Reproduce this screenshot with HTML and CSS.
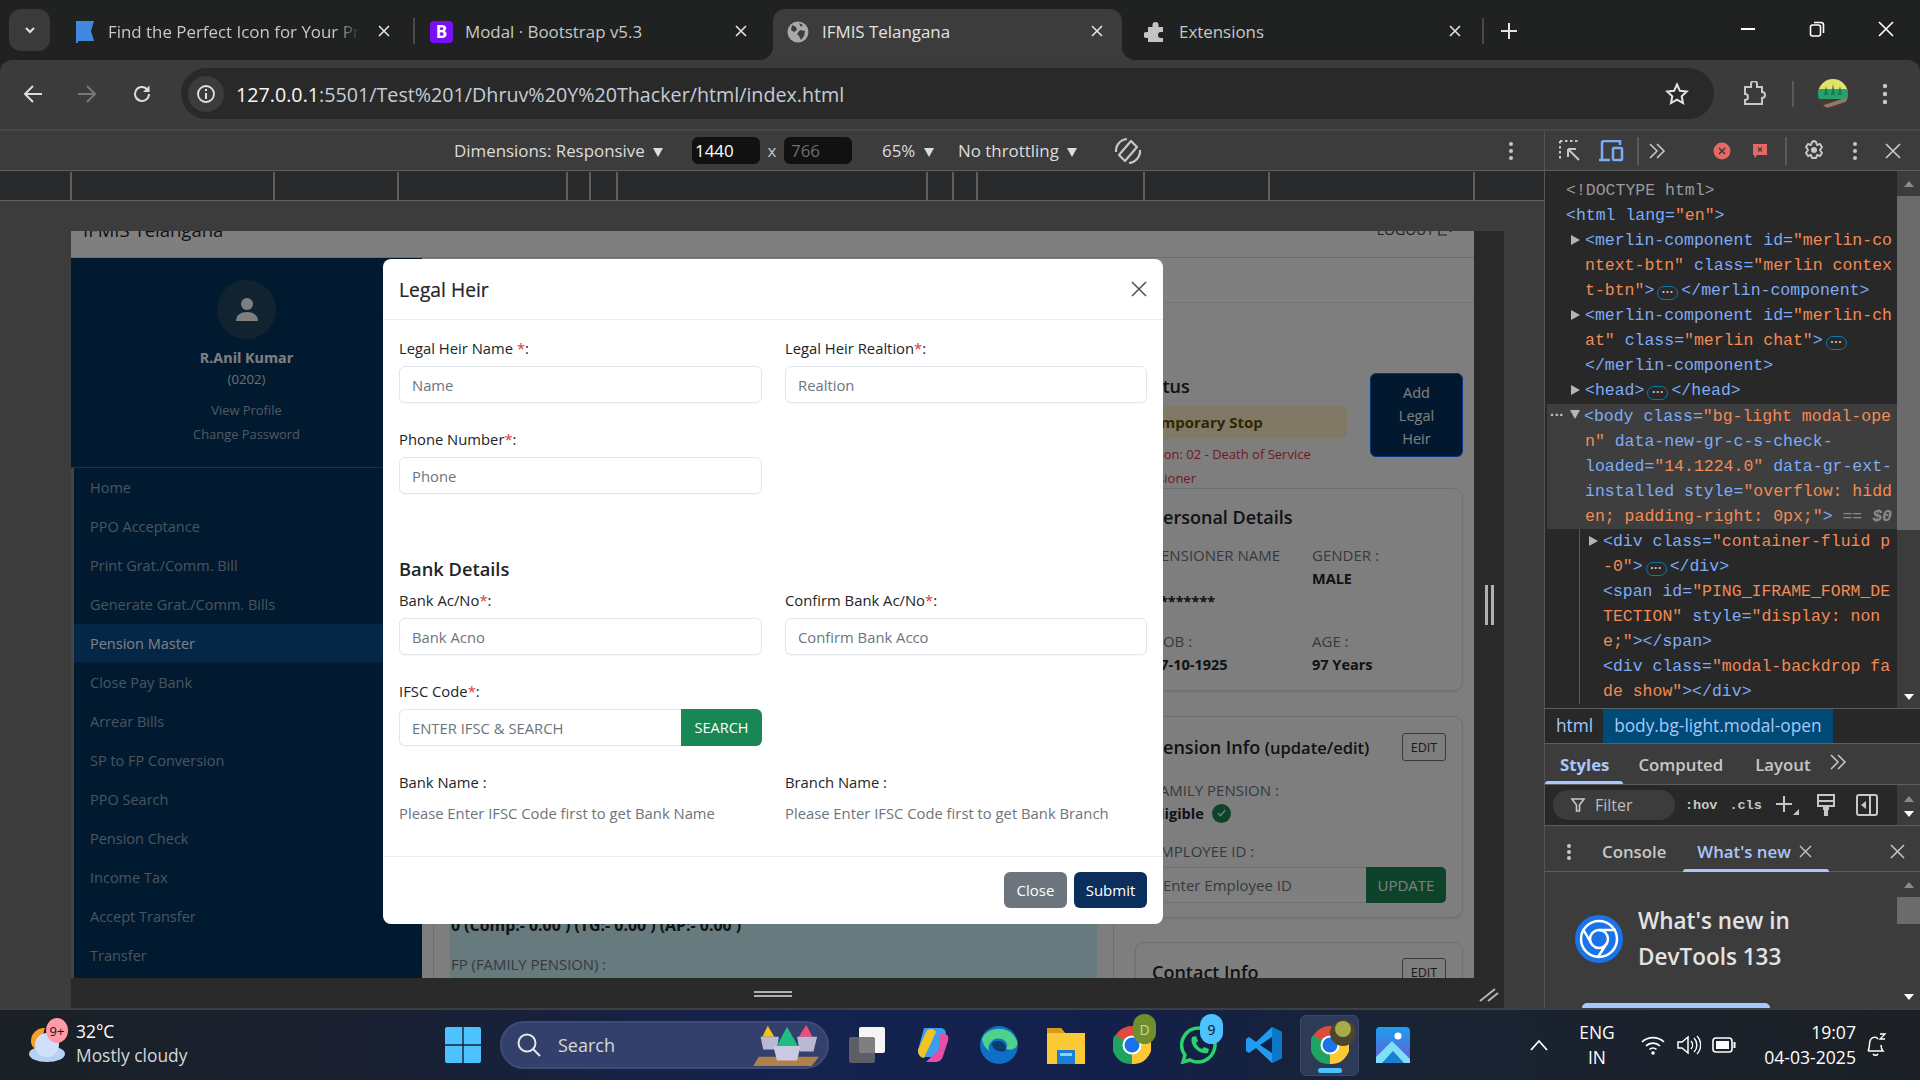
FILE: index.html
```html
<!DOCTYPE html>
<html lang="en">
<head>
<meta charset="utf-8">
<title>IFMIS Telangana</title>
<link rel="stylesheet" href="styles.css">
</head>
<body>
<div class="tabstrip">
  <div class="tabmenu"><svg width="14" height="14" viewBox="0 0 14 14"><path d="M3 5l4 4 4-4" fill="none" stroke="#e3e3e3" stroke-width="2"/></svg></div>
  <div class="tab t1"><svg class="favicon" width="20" height="24" viewBox="0 0 20 24"><path d="M1 1h18l-3 10 3 10H3v2H1z" fill="#3f8ae0"/></svg><span class="tabtitle">Find the Perfect Icon for Your Pr</span><svg class="tabx" width="14" height="14" viewBox="0 0 14 14"><path d="M2 2l10 10M12 2L2 12" stroke="#e3e3e3" stroke-width="1.6"/></svg></div>
  <div class="tabsep"></div>
  <div class="tab t2"><span class="bfav">B</span><span class="tabtitle">Modal · Bootstrap v5.3</span><svg class="tabx" width="14" height="14" viewBox="0 0 14 14"><path d="M2 2l10 10M12 2L2 12" stroke="#e3e3e3" stroke-width="1.6"/></svg></div>
  <div class="tab active"><svg class="favicon" width="22" height="22" viewBox="0 0 22 22"><circle cx="11" cy="11" r="10.5" fill="#a9a9a9"/><path d="M5 4l4 2 1 3-3 2-3-2zM13 9l5 1-1 5-3 4-2-4-2-2zM12 2l4 2-2 2z" fill="#3c3c3c"/></svg><span class="tabtitle">IFMIS Telangana</span><svg class="tabx" width="14" height="14" viewBox="0 0 14 14"><path d="M2 2l10 10M12 2L2 12" stroke="#e3e3e3" stroke-width="1.6"/></svg></div>
  <div class="tab t4"><svg class="favicon" width="22" height="22" viewBox="0 0 22 22"><path d="M4 6h4.500V4a3 3 0 0 1 6 0v2H19v5h-2a3 3 0 0 0 0 6h2v4H4v-4H2.500a3 3 0 0 1 0-6H4z" fill="#c4c4c4"/></svg><span class="tabtitle">Extensions</span><svg class="tabx" width="14" height="14" viewBox="0 0 14 14"><path d="M2 2l10 10M12 2L2 12" stroke="#e3e3e3" stroke-width="1.6"/></svg></div>
  <div class="tabsep last"></div>
  <svg class="newtab" width="16" height="16" viewBox="0 0 16 16"><path d="M8 0v16M0 8h16" stroke="#e3e3e3" stroke-width="2"/></svg>
  <div class="winctl">
    <svg width="16" height="16" viewBox="0 0 16 16"><path d="M1 8h14" stroke="#fff" stroke-width="2"/></svg>
    <svg width="16" height="16" viewBox="0 0 16 16"><rect x="1.5" y="4" width="10" height="11" rx="2" fill="none" stroke="#fff" stroke-width="1.6"/><path d="M5 1.500h7a2.500 2.500 0 0 1 2.500 2.500v8" fill="none" stroke="#fff" stroke-width="1.6"/></svg>
    <svg width="16" height="16" viewBox="0 0 16 16"><path d="M1 1l14 14M15 1L1 15" stroke="#fff" stroke-width="1.6"/></svg>
  </div>
</div>

<div class="toolbar">
  <svg class="tb-back" width="20" height="20" viewBox="0 0 20 20"><path d="M19 10H2M10 2l-8 8 8 8" fill="none" stroke="#dcdcdc" stroke-width="2"/></svg>
  <svg class="tb-fwd" width="20" height="20" viewBox="0 0 20 20"><path d="M1 10h17M10 2l8 8-8 8" fill="none" stroke="#777" stroke-width="2"/></svg>
  <svg class="tb-reload" width="20" height="20" viewBox="0 0 20 20"><path d="M17 10a7 7 0 1 1-2.200-5.100L17 7" fill="none" stroke="#dcdcdc" stroke-width="2"/><path d="M17.500 1.500v6.500h-6.500z" fill="#dcdcdc"/></svg>
  <div class="omnibox">
    <div class="siteinfo"><svg width="20" height="20" viewBox="0 0 20 20"><circle cx="10" cy="10" r="8" fill="none" stroke="#e3e3e3" stroke-width="1.800"/><path d="M10 9v6M10 5v2" stroke="#e3e3e3" stroke-width="2"/></svg></div>
    <span class="url"><b>127.0.0.1</b>:5501/Test%201/Dhruv%20Y%20Thacker/html/index.html</span>
    <svg class="star" width="24" height="24" viewBox="0 0 24 24"><path d="M12 2.500l2.900 6.300 6.800.8-5 4.700 1.300 6.800-6-3.400-6 3.400 1.300-6.800-5-4.700 6.800-.8z" fill="none" stroke="#e3e3e3" stroke-width="2"/></svg>
  </div>
  <svg class="tb-ext" width="24" height="26" viewBox="0 0 24 26"><path d="M3 6h6V3a3 3 0 0 1 6 0v3h5v5a3 3 0 0 1 0 6v6H3v-4a3 3 0 0 0 0-6V6z" fill="none" stroke="#c7c7c7" stroke-width="2"/></svg>
  <div class="tb-sep"></div>
  <svg class="tb-avatar" width="30" height="30" viewBox="0 0 30 30"><defs><clipPath id="av"><circle cx="15" cy="15" r="15"/></clipPath></defs><g clip-path="url(#av)"><rect width="30" height="12" fill="#e2e46a"/><rect y="10" width="30" height="10" fill="#27a06b"/><path d="M6 16l2-9 2 9zM13 16l2-11 2 11zM20 16l2-9 2 9z" fill="#1c7a55"/><rect y="20" width="30" height="10" fill="#4a3a32"/><path d="M0 28L30 18v4L6 30z" fill="#8d7c66"/></g></svg>
  <svg class="tb-kebab" width="6" height="22" viewBox="0 0 6 22"><circle cx="3" cy="3" r="2.200" fill="#c7c7c7"/><circle cx="3" cy="11" r="2.200" fill="#c7c7c7"/><circle cx="3" cy="19" r="2.200" fill="#c7c7c7"/></svg>
</div>

<div class="workspace">
  <div class="emu">
    <div class="devicebar">
      <span class="dt-dim">Dimensions: Responsive <i class="caret"></i></span>
      <span class="dim-input on">1440</span>
      <span class="dim-x">x</span>
      <span class="dim-input off">766</span>
      <span class="dt-zoom">65% <i class="caret"></i></span>
      <span class="dt-thr">No throttling <i class="caret"></i></span>
      <svg class="dt-rot" width="28" height="28" viewBox="0 0 28 28"><g fill="none" stroke="#c7c7c7" stroke-width="2.200"><path d="M17 4l6 6-12 14-6-6z" stroke-linejoin="round"/><path d="M2 15a12 12 0 0 1 11-13M26 13a12 12 0 0 1-11 13"/></g></svg>
      <svg class="dt-keb" width="6" height="20" viewBox="0 0 6 20"><circle cx="3" cy="3" r="2" fill="#c7c7c7"/><circle cx="3" cy="10" r="2" fill="#c7c7c7"/><circle cx="3" cy="17" r="2" fill="#c7c7c7"/></svg>
    </div>
    <div class="ruler">
      <i style="width:72px"></i><i style="width:203px"></i><i style="width:124px"></i><i style="width:169px"></i><i style="width:23px"></i><i style="width:27px"></i><i style="width:310px"></i><i style="width:26px"></i><i style="width:24px"></i><i style="width:167px"></i><i style="width:125px"></i><i style="width:205px"></i>
    </div>
    <div class="canvas">
      <div class="page">
        <header class="apphead"><span class="brand">IFMIS Telangana</span><span class="logout">LOGOUT <svg width="16" height="14" viewBox="0 0 16 14"><path d="M9 1H1v12h8M6 7h9M12 4l3 3-3 3" fill="none" stroke="#333" stroke-width="1.200"/></svg></span></header>
        <div class="appbody">
          <aside class="sidebar">
            <div class="profile">
              <div class="avatar"><svg width="26" height="26" viewBox="0 0 26 26"><circle cx="13" cy="7" r="6" fill="#fff"/><path d="M2 24c0-6 5-9 11-9s11 3 11 9z" fill="#fff"/></svg></div>
              <div class="pname">R.Anil Kumar</div>
              <div class="pcode">(0202)</div>
              <div class="plink first">View Profile</div>
              <div class="plink">Change Password</div>
            </div>
            <nav class="menu">
              <a>Home</a><a>PPO Acceptance</a><a>Print Grat./Comm. Bill</a><a>Generate Grat./Comm. Bills</a><a class="cur">Pension Master</a><a>Close Pay Bank</a><a>Arrear Bills</a><a>SP to FP Conversion</a><a>PPO Search</a><a>Pension Check</a><a>Income Tax</a><a>Accept Transfer</a><a>Transfer</a>
            </nav>
          </aside>
          <main class="content">
            <div class="crumbbar"></div>
            <div class="cols">
              <div class="leftcol">
                <div class="teal"><b>0 (Comp:- 0.00 ) (TG:- 0.00 ) (AP:- 0.00 )</b><span>FP (FAMILY PENSION) :</span></div>
              </div>
              <div class="rightcol">
                <div class="statusrow">
                  <div class="statusinfo">
                    <div class="st-title">Status</div>
                    <div class="pill">Temporary Stop</div>
                    <div class="reason">Reason: 02 - Death of Service<br>Pensioner</div>
                  </div>
                  <button class="addheir">Add<br>Legal<br>Heir</button>
                </div>
                <section class="card c1">
                  <h3>Personal Details</h3>
                  <div class="fields">
                    <div><span class="fl">PENSIONER NAME<br>&nbsp;</span><strong class="stars">********</strong></div>
                    <div><span class="fl">GENDER :</span><strong>MALE</strong></div>
                    <div class="r2"><span class="fl">DOB :</span><strong>07-10-1925</strong></div>
                    <div class="r2"><span class="fl">AGE :</span><strong>97 Years</strong></div>
                  </div>
                </section>
                <section class="card c2">
                  <div class="cardhead"><h3>Pension Info <small>(update/edit)</small></h3><span class="edit">EDIT</span></div>
                  <span class="fl">FAMILY PENSION :</span>
                  <div class="elig"><strong>Eligible</strong><span class="chk"><svg width="10" height="8" viewBox="0 0 10 8"><path d="M1 4l3 3 5-6" fill="none" stroke="#fff" stroke-width="1.500"/></svg></span></div>
                  <span class="fl emp">EMPLOYEE ID :</span>
                  <div class="empgroup"><span class="empinput">Enter Employee ID</span><span class="upd">UPDATE</span></div>
                </section>
                <section class="card c3">
                  <div class="cardhead"><h3>Contact Info</h3><span class="edit">EDIT</span></div>
                </section>
              </div>
            </div>
          </main>
        </div>
        <div class="backdrop"></div>
        <div class="modal">
          <div class="m-head"><h5>Legal Heir</h5><svg width="18" height="18" viewBox="0 0 18 18"><path d="M2 2l14 14M16 2L2 16" stroke="#555" stroke-width="1.600"/></svg></div>
          <div class="m-body">
            <div class="grid top">
              <div class="fg"><label>Legal Heir Name <em>*</em>:</label><div class="inp">Name</div></div>
              <div class="fg"><label>Legal Heir Realtion<em>*</em>:</label><div class="inp">Realtion</div></div>
              <div class="fg"><label>Phone Number<em>*</em>:</label><div class="inp">Phone</div></div>
            </div>
            <h4>Bank Details</h4>
            <div class="grid bank">
              <div class="fg"><label>Bank Ac/No<em>*</em>:</label><div class="inp">Bank Acno</div></div>
              <div class="fg"><label>Confirm Bank Ac/No<em>*</em>:</label><div class="inp">Confirm Bank Acco</div></div>
              <div class="fg"><label>IFSC Code<em>*</em>:</label><div class="igroup"><div class="inp">ENTER IFSC &amp; SEARCH</div><span class="search">SEARCH</span></div></div>
              <div></div>
              <div class="fg info"><label>Bank Name :</label><p>Please Enter IFSC Code first to get Bank Name</p></div>
              <div class="fg info"><label>Branch Name :</label><p>Please Enter IFSC Code first to get Bank Branch</p></div>
            </div>
          </div>
          <div class="m-foot"><span class="btn close">Close</span><span class="btn submit">Submit</span></div>
        </div>
      </div>
      <div class="vhandle"><i></i><i></i></div>
      <div class="hhandle"><i></i><i></i></div>
      <div class="corner"><svg width="20" height="16" viewBox="0 0 20 16"><path d="M1 15L16 3M9 15L19 7" stroke="#b5b5b5" stroke-width="2"/></svg></div>
    </div>
  </div>

  <div class="devtools">
    <div class="dt-top">
      <svg class="i1" width="24" height="24" viewBox="0 0 24 24"><path d="M2 2h18M2 2v18" stroke="#c7c7c7" stroke-width="2" stroke-dasharray="2.500 2.500" fill="none"/><path d="M10 10l11 11M10 10h8M10 10v8" stroke="#c7c7c7" stroke-width="2" fill="none"/></svg>
      <svg class="i2" width="26" height="22" viewBox="0 0 26 22"><path d="M1 20h11M4 20V3a2 2 0 0 1 2-2h16v4" fill="none" stroke="#7cacf8" stroke-width="2.500"/><rect x="15" y="8" width="9" height="12" rx="1" fill="none" stroke="#7cacf8" stroke-width="2.500"/></svg>
      <div class="vsep s1"></div>
      <svg class="i3" width="18" height="18" viewBox="0 0 18 18"><path d="M2 2l7 7-7 7M9 2l7 7-7 7" fill="none" stroke="#c7c7c7" stroke-width="1.600"/></svg>
      <svg class="i4" width="18" height="18" viewBox="0 0 18 18"><circle cx="9" cy="9" r="8.500" fill="#e46962"/><path d="M6 6l6 6M12 6l-6 6" stroke="#3c3c3c" stroke-width="1.600"/></svg>
      <svg class="i5" width="16" height="16" viewBox="0 0 16 16"><path d="M1 1h14v11H5l-2 3-1-3H1z" fill="#e46962"/><path d="M6 4.500l4 4M10 4.500l-4 4" stroke="#3c3c3c" stroke-width="1.300"/></svg>
      <div class="vsep s2"></div>
      <svg class="i6" width="24" height="24" viewBox="0 0 24 24"><path d="M12 2l2 1 1 3 3-1 2 3-2 3 2 3-2 3-3-1-1 3-4 0-1-3-3 1-2-3 2-3-2-3 2-3 3 1 1-3z" fill="none" stroke="#c7c7c7" stroke-width="2" stroke-linejoin="round"/><circle cx="12" cy="11" r="3" fill="#c7c7c7"/></svg>
      <svg class="i7" width="6" height="20" viewBox="0 0 6 20"><circle cx="3" cy="3" r="2" fill="#c7c7c7"/><circle cx="3" cy="10" r="2" fill="#c7c7c7"/><circle cx="3" cy="17" r="2" fill="#c7c7c7"/></svg>
      <svg class="i8" width="16" height="16" viewBox="0 0 16 16"><path d="M1 1l14 14M15 1L1 15" stroke="#c7c7c7" stroke-width="1.700"/></svg>
    </div>
    <div class="elements">
      <div class="code">
        <div class="l0 doctype">&lt;!DOCTYPE html&gt;</div>
        <div class="l0"><t>&lt;html lang=</t><v>"en"</v><t>&gt;</t></div>
        <div class="l1"><u></u><t>&lt;merlin-component id=</t><v>"merlin-co</v></div>
        <div class="l1"><v>ntext-btn"</v> <t>class=</t><v>"merlin contex</v></div>
        <div class="l1"><v>t-btn"</v><t>&gt;</t><s>···</s><t>&lt;/merlin-component&gt;</t></div>
        <div class="l1"><u></u><t>&lt;merlin-component id=</t><v>"merlin-ch</v></div>
        <div class="l1"><v>at"</v> <t>class=</t><v>"merlin chat"</v><t>&gt;</t><s>···</s></div>
        <div class="l1"><t>&lt;/merlin-component&gt;</t></div>
        <div class="l1"><u></u><t>&lt;head&gt;</t><s>···</s><t>&lt;/head&gt;</t></div>
        <div class="sel">
          <div class="l1"><span class="dots">···</span><u class="down"></u><t>&lt;body class=</t><v>"bg-light modal-ope</v></div>
          <div class="l1"><v>n"</v> <t>data-new-gr-c-s-check-</t></div>
          <div class="l1"><t>loaded=</t><v>"14.1224.0"</v> <t>data-gr-ext-</t></div>
          <div class="l1"><t>installed style=</t><v>"overflow: hidd</v></div>
          <div class="l1"><v>en; padding-right: 0px;"</v><t>&gt;</t> <span class="eq">== <i>$0</i></span></div>
        </div>
        <div class="nest">
          <div class="l2"><u></u><t>&lt;div class=</t><v>"container-fluid p</v></div>
          <div class="l2"><v>-0"</v><t>&gt;</t><s>···</s><t>&lt;/div&gt;</t></div>
          <div class="l2"><t>&lt;span id=</t><v>"PING_IFRAME_FORM_DE</v></div>
          <div class="l2"><v>TECTION"</v> <t>style=</t><v>"display: non</v></div>
          <div class="l2"><v>e;"</v><t>&gt;&lt;/span&gt;</t></div>
          <div class="l2"><t>&lt;div class=</t><v>"modal-backdrop fa</v></div>
          <div class="l2"><v>de show"</v><t>&gt;&lt;/div&gt;</t></div>
        </div>
      </div>
      <div class="vscroll big"><i class="up"></i><i class="thumb"></i><i class="dn"></i></div>
    </div>
    <div class="crumbs"><span>html</span><span class="on">body.bg-light.modal-open</span></div>
    <div class="subtabs"><span class="on">Styles</span><span>Computed</span><span>Layout</span><svg width="18" height="16" viewBox="0 0 18 16"><path d="M2 1l7 7-7 7M9 1l7 7-7 7" fill="none" stroke="#c7c7c7" stroke-width="1.500"/></svg></div>
    <div class="filterrow">
      <div class="filter"><svg width="16" height="16" viewBox="0 0 16 16"><path d="M2 2h12L9.500 8v6h-3V8z" fill="none" stroke="#c7c7c7" stroke-width="1.600"/></svg>Filter</div>
      <b class="hov">:hov</b><b class="cls">.cls</b>
      <svg class="plus" width="26" height="22" viewBox="0 0 26 22"><path d="M9 2v16M1 10h16" stroke="#c7c7c7" stroke-width="2"/><path d="M24 15v6h-6z" fill="#c7c7c7"/></svg>
      <svg class="brush" width="20" height="24" viewBox="0 0 20 24"><path d="M2 2h16v11H2zM2 8h16" fill="none" stroke="#c7c7c7" stroke-width="2"/><path d="M7 13h6v4h-1v6H8v-6H7z" fill="#c7c7c7"/></svg>
      <svg class="panel" width="22" height="22" viewBox="0 0 22 22"><rect x="1" y="1" width="20" height="20" rx="2" fill="none" stroke="#c7c7c7" stroke-width="2"/><path d="M14 1v20" stroke="#c7c7c7" stroke-width="2"/><path d="M10 7v8l-5-4z" fill="#c7c7c7"/></svg>
      <div class="vscroll"><i class="up"></i><i class="dn"></i></div>
    </div>
    <div class="drawertabs">
      <svg class="dk" width="6" height="18" viewBox="0 0 6 18"><circle cx="3" cy="3" r="2" fill="#c7c7c7"/><circle cx="3" cy="9" r="2" fill="#c7c7c7"/><circle cx="3" cy="15" r="2" fill="#c7c7c7"/></svg>
      <span class="con">Console</span>
      <span class="wn">What's new <svg width="13" height="13" viewBox="0 0 13 13"><path d="M1 1l11 11M12 1L1 12" stroke="#c7c7c7" stroke-width="1.400"/></svg></span>
      <svg class="dx" width="15" height="15" viewBox="0 0 15 15"><path d="M1 1l13 13M14 1L1 14" stroke="#c7c7c7" stroke-width="1.500"/></svg>
    </div>
    <div class="drawer">
      <div class="wnbody">
        <div class="wnhead">
          <svg width="48" height="48" viewBox="0 0 48 48"><circle cx="24" cy="24" r="24" fill="#1a73e8"/><circle cx="24" cy="24" r="18" fill="none" stroke="#fff" stroke-width="2.500"/><circle cx="24" cy="24" r="9" fill="none" stroke="#fff" stroke-width="2.500"/><path d="M24 15h17M16 28L8 14M32 28L23 42" stroke="#fff" stroke-width="2.500"/></svg>
          <div class="wntext">What's new in<br>DevTools 133</div>
        </div>
        <div class="wnbtn"></div>
      </div>
      <div class="vscroll small"><i class="up"></i><i class="thumb"></i><i class="dn"></i></div>
    </div>
  </div>
</div>

<footer class="taskbar">
  <div class="weather">
    <svg width="36" height="34" viewBox="0 0 36 34"><path d="M16 0a13 13 0 0 0-14 13c0 4 2 7 5 8l9-8c-2-4-2-9 0-13z" fill="#f5a12c"/><ellipse cx="18" cy="26" rx="18" ry="8" fill="#b6d1f5"/><circle cx="18" cy="17" r="12" fill="#cfe1fa"/></svg>
    <span class="badge">9+</span>
    <div class="wtxt"><div>32°C</div><div class="dim">Mostly cloudy</div></div>
  </div>
  <svg class="startbtn" width="36" height="36" viewBox="0 0 36 36"><path d="M0 2a2 2 0 0 1 2-2h15.300v17.300H0zM18.700 0H34a2 2 0 0 1 2 2v15.300H18.700zM0 18.700h17.300V36H2a2 2 0 0 1-2-2zM18.700 18.700H36V34a2 2 0 0 1-2 2H18.700z" fill="#4cc2ff"/></svg>
  <div class="searchbox">
    <svg width="26" height="26" viewBox="0 0 26 26"><circle cx="11" cy="11" r="8.500" fill="none" stroke="#e6e6e6" stroke-width="2"/><path d="M17 17l7 7" stroke="#e6e6e6" stroke-width="2"/></svg>
    <span>Search</span>
    <svg class="holi" width="74" height="42" viewBox="0 0 74 46"><path d="M6 36h66l-8 10H0z" fill="#b0804a"/><path d="M10 14l6-12 7 12z" fill="#f1c40f"/><path d="M50 14l8-13 7 13z" fill="#ec4f7c"/><path d="M8 14h20l-2 14H11zM48 14h22l-4 16H51z" fill="#b9b9d6"/><path d="M26 24L37 3l12 21z" fill="#1fbf83"/><path d="M22 24h30l-4 16H26z" fill="#c9c9e3"/></svg>
  </div>
  <svg class="tk tk-view" width="36" height="36" viewBox="0 0 36 36"><rect x="10" width="26" height="26" rx="2" fill="#f5f5f5"/><rect y="10" width="26" height="26" rx="2" fill="#6a6a6a" fill-opacity=".85"/></svg>
  <svg class="tk tk-cop" width="36" height="38" viewBox="0 0 36 38"><path d="M10 2h16a6 6 0 0 1 6 5l-8 24H10a6 6 0 0 1-6-7z" fill="#3b9df0"/><path d="M4 24L12 6c2-4 8-4 10 0L10 32c-3 0-6-3-6-8z" fill="#f3c422"/><path d="M26 8h4c4 0 5 3 4 7l-5 15c-1 4-4 6-8 6h-9l8-8c3-1 4-3 5-6z" fill="#e44fa3"/></svg>
  <svg class="tk tk-edge" width="38" height="40" viewBox="0 0 38 40"><circle cx="19" cy="20" r="19" fill="#0f6fc6"/><path d="M2 14C6 2 30-2 37 16c2 8-6 10-11 8 5-8-8-14-14-8-4 4-4 8-2 10C6 24 3 20 2 14z" fill="#4ed18c"/><path d="M12 18c5-4 14-2 14 6 0 3-4 3-7 2-4 0-7-4-7-8z" fill="#0b3c6f"/></svg>
  <svg class="tk tk-files" width="38" height="38" viewBox="0 0 38 38"><path d="M0 2h14l4 5h20v31H0z" fill="#fbc935"/><path d="M0 2h14l3 5H0z" fill="#d99a19"/><path d="M10 24h18v14H10z" fill="#1c7fd6"/><path d="M13 27h12v3H13z" fill="#8fd1f5"/></svg>
  <div class="tk tk-wrap chr">
    <svg width="38" height="38" viewBox="0 0 38 38"><circle cx="19" cy="19" r="19" fill="#dd4b3e"/><path d="M19 19L2 9A19 19 0 0 0 19 38z" fill="#1ea362"/><path d="M19 19V38A19 19 0 0 0 36 9z" fill="#fcc934"/><circle cx="19" cy="19" r="9.500" fill="#fff"/><circle cx="19" cy="19" r="7.500" fill="#1a73e8"/></svg>
    <span class="tkb olive">D</span>
  </div>
  <div class="tk tk-wrap wa">
    <svg width="38" height="38" viewBox="0 0 38 38"><path d="M19 2a17 17 0 0 0-14 27L3 36l7-2A17 17 0 1 0 19 2z" fill="none" stroke="#2bd16f" stroke-width="3.500"/><path d="M12 11l4-1 2 5-2 2c1 3 3 5 6 6l2-2 5 2-1 4c-9 2-19-8-16-16z" fill="#2bd16f"/></svg>
    <span class="tkb sky">9</span>
  </div>
  <svg class="tk tk-vs" width="36" height="36" viewBox="0 0 36 36"><path d="M26 0l10 5v26l-10 5-16-15-7 5-3-2v-12l3-2 7 5z" fill="#1f9cf0"/><path d="M26 10L14 18l12 8z" fill="#14203f"/><path d="M26 0l10 5v26l-10 5z" fill="#0b79c9"/></svg>
  <div class="tk-active">
    <div class="tk-wrap">
      <svg width="38" height="38" viewBox="0 0 38 38"><circle cx="19" cy="19" r="19" fill="#dd4b3e"/><path d="M19 19L2 9A19 19 0 0 0 19 38z" fill="#1ea362"/><path d="M19 19V38A19 19 0 0 0 36 9z" fill="#fcc934"/><circle cx="19" cy="19" r="9.500" fill="#fff"/><circle cx="19" cy="19" r="7.500" fill="#1a73e8"/></svg>
      <svg class="tkimg" width="26" height="26" viewBox="0 0 26 26"><circle cx="13" cy="13" r="13" fill="#4a4630"/><circle cx="13" cy="9" r="8" fill="#a8ab4a"/></svg>
    </div>
    <i></i>
  </div>
  <svg class="tk tk-photo" width="34" height="36" viewBox="0 0 34 36"><defs><linearGradient id="ph" x1="0" y1="0" x2="0" y2="1"><stop offset="0" stop-color="#1c9fee"/><stop offset="1" stop-color="#6a57d5"/></linearGradient></defs><rect width="34" height="36" rx="4" fill="url(#ph)"/><circle cx="22" cy="9" r="3.500" fill="#fff"/><path d="M0 30L16 14l18 18v4H0z" fill="#7fe0f5"/><path d="M6 36l11-12 11 12z" fill="#1a7fd4"/></svg>
  <div class="tray">
    <svg class="up" width="18" height="12" viewBox="0 0 18 12"><path d="M1 11l8-9 8 9" fill="none" stroke="#fff" stroke-width="1.800"/></svg>
    <div class="lang">ENG<br>IN</div>
    <svg class="wifi" width="24" height="20" viewBox="0 0 24 20"><path d="M1 7a16 16 0 0 1 22 0M5 11a10 10 0 0 1 14 0M8.500 14.500a5 5 0 0 1 7 0" fill="none" stroke="#fff" stroke-width="1.700"/><circle cx="12" cy="18" r="1.800" fill="#fff"/></svg>
    <svg class="vol" width="24" height="22" viewBox="0 0 24 22"><path d="M1 8h4l6-5v16l-6-5H1z" fill="none" stroke="#fff" stroke-width="1.500"/><path d="M14 7a6 6 0 0 1 0 8M17 4a10 10 0 0 1 0 14M20 2a13 13 0 0 1 0 18" fill="none" stroke="#fff" stroke-width="1.400"/></svg>
    <svg class="batt" width="24" height="16" viewBox="0 0 24 16"><rect x="1" y="1" width="19" height="14" rx="3" fill="none" stroke="#fff" stroke-width="1.600"/><rect x="4" y="4" width="13" height="8" fill="#fff"/><rect x="21.500" y="5" width="2" height="6" fill="#fff"/></svg>
    <div class="clock">19:07<br>04-03-2025</div>
    <svg class="bell" width="22" height="26" viewBox="0 0 22 26"><path d="M3 19c2-3 1-7 2-10 1-4 6-5 8-2M3 19h15c-1-1-2-3-2-6M8 22a3 3 0 0 0 5 0" fill="none" stroke="#fff" stroke-width="1.500"/><path d="M15 2h5l-5 5h5" fill="none" stroke="#fff" stroke-width="1.300"/></svg>
  </div>
</footer>
</body>
</html>
```
FILE: styles.css
```css
*{box-sizing:border-box}
html,body{margin:0;padding:0}
body{width:1920px;height:1080px;overflow:hidden;display:flex;flex-direction:column;background:#202222;font-family:"Open Sans","Noto Sans",sans-serif;color:#e3e3e3}
svg{display:block;flex:none}

/* tab strip */
.tabstrip{height:60px;display:flex;align-items:flex-start;background:#202222;flex:none}
.tabmenu{width:41px;height:42px;margin:9px 0 0 9px;background:#3a3a3a;border-radius:12px;display:flex;align-items:center;justify-content:center}
.tab{position:relative;width:349px;height:51px;margin-top:9px;padding:0 0 6px 14px;display:flex;align-items:center;color:#c7c7c7;flex:none}
.tab.t1{margin-left:11px;width:351px}
.tab.active{margin-left:8px;background:#3c3c3c;border-radius:12px 12px 0 0;color:#e3e3e3}
.tab.active:before,.tab.active:after{content:"";position:absolute;bottom:0;width:14px;height:14px}
.tab.active:before{left:-14px;background:radial-gradient(circle at 0 0,transparent 14px,#3c3c3c 14.500px)}
.tab.active:after{right:-14px;background:radial-gradient(circle at 100% 0,transparent 14px,#3c3c3c 14.500px)}
.tab.t4{margin-left:8px;width:352px}
.favicon{margin-right:13px}
.bfav{width:23px;height:22px;margin-right:12px;border-radius:4px;background:#7a10f5;color:#fff;font-size:17px;font-weight:700;display:flex;align-items:center;justify-content:center;line-height:1}
.tabtitle{white-space:nowrap;width:255px;overflow:hidden;font-size:16.900px}
.tabx{position:absolute;right:18px;top:15px}
.t1 .tabtitle{width:252px;-webkit-mask-image:linear-gradient(90deg,#000 90%,transparent)}
.t1 .tabx{right:21px}
.t2 .tabx{right:17px}
.t4 .tabx{right:20px}
.tabsep{width:2px;height:26px;background:#4a4a4a;margin:18px 0 0;flex:none}
.tab.t1+.tabsep{margin-left:1px}
.tabsep+.tab{margin-left:1px}
.tabsep.last{margin-left:0}
.newtab{margin:23px 0 0 17px}
.winctl{margin-left:auto;display:flex;gap:53px;margin-top:21px;padding-right:26px}

/* toolbar */
.toolbar{height:71px;flex:none;display:flex;align-items:center;background:#3b3b3b;border-radius:12px 12px 0 0;border-bottom:2px solid #484848;padding-bottom:2px}
.tb-back{margin-left:23px}
.tb-fwd{margin-left:34px}
.tb-reload{margin-left:35px}
.omnibox{margin-left:29px;width:1533px;height:51px;border-radius:26px;background:#292929;display:flex;align-items:center;padding-left:7px}
.siteinfo{width:36px;height:36px;border-radius:50%;background:#3c3c3c;display:flex;align-items:center;justify-content:center}
.url{margin:1px 0 0 12px;font-size:19.700px;color:#c6ccd6}
.url b{font-weight:400;color:#f6f6f6}
.star{margin-left:auto;margin-right:25px}
.tb-ext{margin-left:28px}
.tb-sep{width:2px;height:26px;background:#5a5a5a;margin-left:26px}
.tb-avatar{margin-left:24px}
.tb-kebab{margin-left:34px}

/* workspace */
.workspace{flex:1;min-height:0;display:flex}
.emu{width:1545px;display:flex;flex-direction:column;background:#3c3c3c;border-right:1px solid #555}
.devicebar{height:40px;flex:none;display:flex;align-items:center;font-size:16.900px;color:#dcdcdc;border-bottom:1px solid #606060}
.caret{display:inline-block;border-left:5.500px solid transparent;border-right:5.500px solid transparent;border-top:9px solid #dcdcdc;margin-left:4px}
.dt-dim{margin-left:454px;width:238px;white-space:nowrap}
.dim-input{height:27px;width:68px;border-radius:6px;background:#111;display:flex;align-items:center;padding-left:3px;color:#fff}
.dim-input.off{color:#6e6e6e;padding-left:7px}
.dim-x{width:24px;text-align:center;color:#c7c7c7}
.dt-zoom{margin-left:30px;width:76px;white-space:nowrap}
.dt-thr{width:156px;white-space:nowrap}
.dt-keb{margin-left:366px}
.ruler{height:30px;flex:none;display:flex;background:#28292b;border-bottom:1px solid #606060;width:100%;padding-top:1px}
.ruler i{display:block;height:28px;border-right:2px solid #5e5e5e}
.canvas{flex:1;min-height:0;display:grid;grid-template-columns:71px 1403px 30px 1fr;grid-template-rows:30px 747px 31px}
.page{grid-column:2;grid-row:2;position:relative;overflow:hidden;background:#fcfcfc;color:#212529}
.vhandle{grid-column:3;grid-row:2/4;background:#2a2a2b;display:flex;gap:3px;justify-content:center;padding-top:354px;align-items:flex-start}
.vhandle i{display:block;width:3px;height:40px;background:#b0b0b0}
.hhandle{grid-column:2;grid-row:3;background:#2a2a2b;display:flex;flex-direction:column;gap:2px;align-items:center;padding-top:13px}
.hhandle i{display:block;width:38px;height:2px;background:#b0b0b0}
.corner{grid-column:3;grid-row:3;background:#2a2a2b;padding:8px 0 0 5px}

/* page */
.apphead{height:55px;margin-top:-28px;background:#fff;display:flex;align-items:center;justify-content:space-between;padding:0 20px 2px 12px;border-bottom:1px solid #d9d9d9}
.brand{font-size:18.500px;color:#212529}
.logout{font-size:14px;display:flex;gap:4px;align-items:center;color:#444}
.appbody{display:flex;height:720px}
.sidebar{width:351px;flex:none;background:#04345f;display:flex;flex-direction:column}
.profile{height:210px;flex:none;border-bottom:1px solid #3d6488;display:flex;flex-direction:column;align-items:center;padding-top:22px;color:#fff}
.avatar{width:59px;height:59px;border-radius:50%;background:#234660;display:flex;align-items:center;justify-content:center}
.pname{font-size:14.300px;font-weight:700;margin-top:8px;line-height:22px;color:#fff}
.pcode{font-size:13.200px;line-height:21px;color:#ddd}
.plink{font-size:12.900px;line-height:24px;color:#9fb4c8}
.plink.first{margin-top:8px}
.menu{flex:1;border-left:3px solid #8a8a8a}
.menu a{display:block;height:39px;line-height:40px;padding-left:16px;font-size:14.500px;color:#92a9bf;border-bottom:1px solid #053a6a;white-space:nowrap}
.menu a.cur{background:#084d8f;color:#fff}
.content{flex:1;display:flex;flex-direction:column;min-width:0}
.crumbbar{height:45px;flex:none;border-bottom:1px solid #e8e8e8;background:#fefefe}
.cols{flex:1;display:flex;min-height:0;overflow:hidden;padding-left:11px}
.leftcol{width:681px;flex:none;margin-right:21px;border-left:1px solid #dcdcdc;border-right:1px solid #dcdcdc;display:flex;flex-direction:column;justify-content:flex-end;padding-left:16px;padding-right:16px}
.teal{height:54px;background:#cff4fc;display:flex;flex-direction:column;line-height:20px;padding-left:1px}
.teal b{margin-top:-9px;display:block;line-height:20px;font-size:15.900px}
.teal span{margin-top:19px;color:#6c757d;font-size:14.900px}
.rightcol{width:328px;flex:none;padding-top:70px}
.statusrow{height:115px;display:flex}
.statusinfo{width:235px;flex:none}
.st-title{font-size:18px;font-weight:600;line-height:26px}
.pill{margin:7px 0 0;height:33px;width:212px;padding-left:8px;border-radius:6px;background:#fff3cd;color:#664d03;font-weight:700;font-size:15px;line-height:33px}
.reason{margin-top:3px;color:#dc3545;font-size:13px;line-height:24px}
.addheir{width:93px;height:84px;border:1px solid #0d6efd;border-radius:6px;background:#04305f;color:#fff;font:14.500px/23px "Open Sans",sans-serif;padding:0}
.card{border:1px solid #dedede;border-radius:9px;background:#fdfdfd;padding:0 16px;margin-bottom:25px;box-shadow:0 1px 2px rgba(0,0,0,.08)}
.card h3{margin:0;font-size:18px;font-weight:600;line-height:30px;color:#212529;white-space:nowrap}
.card.c1{height:203px;padding-top:13px}
.card.c2{height:202px;padding-top:16px;margin-bottom:24px}
.card.c3{height:100px;padding-top:15px}
.fields{display:grid;grid-template-columns:160px 1fr;margin-top:11px}
.fl{display:block;font-size:15px;line-height:24px;color:#6c757d;white-space:nowrap}
.fields strong{display:block;font-size:14.500px;line-height:24px;font-weight:700;color:#212529}
.fields strong.stars{line-height:18px;margin-top:2px}
.fields>div{height:74px}
.fields .r2{margin-top:12px}
.cardhead{display:flex;justify-content:space-between;align-items:center;height:28px}
.cardhead small{font-size:16.500px;font-weight:600}
.edit{width:44px;height:28px;border:1px solid #6c757d;border-radius:3px;font-size:12.500px;color:#333;display:flex;align-items:center;justify-content:center}
.c2 .fl:first-of-type{margin-top:17px}
.elig{display:flex;align-items:center;gap:8px;height:22px;font-size:14.500px}
.chk{width:19px;height:19px;border-radius:50%;background:#198754;display:flex;align-items:center;justify-content:center}
.chk svg{width:9px}
.fl.emp{margin-top:15px}
.empgroup{display:flex;height:36px;margin-top:4px;border-radius:5px;border:1px solid #e4e4e4}
.empinput{flex:1;padding-left:10px;line-height:34px;font-size:15px;color:#6c757d;background:#fff}
.upd{width:80px;background:#198754;color:#fff;font-size:15px;display:flex;align-items:center;justify-content:center;border-radius:0 5px 5px 0;margin:-1px}
.backdrop{position:absolute;inset:0;background:rgba(0,0,0,.5)}

/* modal */
.modal{position:absolute;left:312px;top:28px;width:780px;height:665px;background:#fff;border-radius:8px;display:flex;flex-direction:column;color:#212529;font-size:15px}
.m-head{height:61px;flex:none;display:flex;align-items:center;justify-content:space-between;padding:0 15px 0 16px;border-bottom:1px solid #eceef0}
.m-head h5{margin:0;font-size:19.300px;font-weight:400;color:#212529;-webkit-text-stroke:.2px #212529}
.m-body{flex:1;padding:0 0 0 16px}
.grid{display:grid;grid-template-columns:363px 362px;column-gap:23px;align-content:start}
.grid.top{height:236px}
.grid.bank{margin-top:-10px}
.fg{height:91px;padding-top:18px}
.fg label{display:block;line-height:20px;font-size:14.800px;height:28px}
.fg em{font-style:normal;color:#dc3545}
.inp{height:37px;border:1px solid #e3e6ea;border-radius:6px;padding-left:12px;line-height:37px;font-size:14.800px;color:#6c757d;background:#fff;box-shadow:0 1px 1px rgba(0,0,0,.03)}
.m-body h4{margin:0;height:26px;font-size:18.300px;font-weight:600;line-height:26px;color:#212529}
.igroup{display:flex}
.igroup .inp{flex:1;border-radius:6px 0 0 6px;border-right:0}
.search{width:81px;height:37px;background:#198754;color:#fff;font-size:14.500px;display:flex;align-items:center;justify-content:center;border-radius:0 6px 6px 0}
.info p{margin:3px 0 0;font-size:14.800px;line-height:20px;color:#6c757d;white-space:nowrap}
.m-foot{height:68px;flex:none;border-top:1px solid #eceef0;display:flex;justify-content:flex-end;align-items:flex-start;padding:15px 16px 0;gap:7px}
.btn{height:36px;border-radius:6px;display:flex;align-items:center;justify-content:center;color:#fff;font-size:15px}
.close{width:63px;background:#6c757d}
.submit{width:73px;background:#0b2e5c}

/* devtools */
.devtools{width:375px;flex:none;display:flex;flex-direction:column;background:#3c3c3c}
.dt-top{height:40px;flex:none;display:flex;align-items:center;border-bottom:1px solid #5e5e5e}
.dt-top .i1{margin-left:13px}
.dt-top .i2{margin-left:16px}
.vsep{width:2px;height:28px;background:#5a5a5a}
.s1{margin-left:13px}
.i3{margin-left:9px}
.i4{margin-left:47px}
.i5{margin-left:21px}
.s2{margin-left:17px}
.i6{margin-left:15px}
.i7{margin-left:26px}
.i8{margin-left:27px}
.elements{height:538px;flex:none;display:flex;background:#282828;border-bottom:1px solid #5e5e5e}
.code{width:352px;flex:none;padding:7px 0 0 0;font:16.500px/25px "Liberation Mono",monospace;color:#a8c7fa;overflow:hidden}
.code .l0,.code .l1,.code .l2{white-space:pre}
.code t{color:#7cacf8}
.code v{color:#f28b54}
.code .doctype{color:#9a9a9a}
.l0{padding-left:21px}
.l1{padding-left:40px;position:relative}
.l2{padding-left:58px;position:relative}
.code u{display:inline-block;text-decoration:none;width:0;height:0;margin-left:-14px;margin-right:5px;border-left:9px solid #b5b5b5;border-top:5.500px solid transparent;border-bottom:5.500px solid transparent}
.code u.down{border-top:9px solid #b5b5b5;border-left:5.500px solid transparent;border-right:5.500px solid transparent;border-bottom:0;margin-left:-15px;margin-right:4px;vertical-align:2px}
.code s{display:inline-block;text-decoration:none;width:21px;height:14px;margin:0 3px;border:1px solid #0b7aa8;border-radius:7px;font:700 12px/11px "Liberation Sans",sans-serif;text-align:center;color:#c7c7c7;vertical-align:-1px}
.sel{background:#3e3e3e;margin:1px 0 0 2px;height:125px}
.sel .l1{padding-left:38px}
.dots{position:absolute;left:3px;top:0;font:700 14px/22px "Liberation Sans",sans-serif;color:#c7c7c7}
.eq{color:#8a8a8a}
.eq i{font-style:italic;font-weight:700}
.nest{border-left:1px solid #5a5a5a;margin-left:34px}
.nest .l2{padding-left:23px}
.vscroll{flex:1;background:#3c3c3c;position:relative;display:flex;flex-direction:column;align-items:stretch}
.vscroll .up,.vscroll .dn{display:block;width:0;height:0;margin:0 auto;border-left:5.500px solid transparent;border-right:5.500px solid transparent}
.vscroll .up{border-bottom:6px solid #8a8a8a;margin-top:10px}
.vscroll .dn{border-top:6px solid #fff;margin-top:auto;margin-bottom:8px}
.vscroll .thumb{display:block;background:#6b6b6b}
.big .thumb{height:334px;margin-top:9px}
.small .thumb{height:27px;margin-top:9px}
.crumbs{height:35px;flex:none;display:flex;background:#282828;font-size:17.300px;border-bottom:1px solid #5e5e5e;color:#a8c7fa}
.crumbs span{padding:0 11px;line-height:34px}
.crumbs span:first-child{padding-right:10px}
.crumbs span.on{background:#004a77}
.subtabs{height:41px;flex:none;display:flex;align-items:center;font-size:16.800px;font-weight:600;color:#c7c7c7;border-bottom:1px solid #5e5e5e;position:relative}
.subtabs span{margin-left:32px}
.subtabs span:first-child{margin-left:15px;color:#a8c7fa;font-weight:700}
.subtabs span:nth-child(2){margin-left:29px}
.subtabs svg{margin-left:18px;margin-top:-4px}
.subtabs:after{content:"";position:absolute;left:0;width:78px;height:3px;bottom:0;background:#a8c7fa;border-radius:3px 3px 0 0}
.filterrow{height:40px;flex:none;display:flex;align-items:center;background:#282828;position:relative;font-size:15px;color:#c7c7c7}
.filter{margin-left:8px;width:122px;height:30px;border-radius:15px;background:#3c3c3c;display:flex;align-items:center;gap:9px;padding-left:17px;font-size:16px;color:#bdbdbd}
.hov{margin-left:10px;font:700 13.500px "Liberation Mono",monospace}
.cls{margin-left:12px;font:700 13.500px "Liberation Mono",monospace}
.plus{margin-left:13px}
.brush{margin-left:15px}
.panel{margin-left:20px}
.filterrow .vscroll{height:40px;flex:none;width:23px;margin-left:auto}
.filterrow .up{margin-top:11px}
.drawertabs{height:47px;flex:none;display:flex;align-items:center;border-top:1px solid #5e5e5e;box-shadow:inset 0 -1px 0 #5e5e5e;position:relative;font-size:16.800px;font-weight:600;color:#c7c7c7;padding-top:5px;background:#3c3c3c}
.dk{margin-left:21px}
.con{margin-left:30px}
.wn{margin-left:31px;color:#a8c7fa;display:flex;align-items:center;gap:8px}
.dx{margin-left:auto;margin-right:15px}
.drawertabs:after{content:"";position:absolute;left:138px;width:146px;height:3px;bottom:0;background:#a8c7fa;border-radius:3px 3px 0 0}
.drawer{flex:1;min-height:0;display:flex;overflow:hidden;background:#3c3c3c}
.wnbody{width:352px;flex:none;display:flex;flex-direction:column}
.wnhead{display:flex;align-items:center;padding:31px 0 0 30px;gap:15px}
.wntext{font-size:22.500px;line-height:36px;font-weight:600;color:#e3e3e3}
.wnbtn{width:188px;height:20px;margin:28px 0 0 37px;border-radius:14px 14px 0 0;background:#a8c7fa}

/* taskbar */
.taskbar{height:72px;flex:none;display:flex;align-items:center;position:relative;border-top:2px solid #3c3f44;background:linear-gradient(90deg,#1b2026 0,#1a2030 18%,#14234f 42%,#13204a 58%,#192333 74%,#1c2024 100%);color:#fff}
.weather{display:flex;align-items:center;margin-left:29px;width:416px;position:relative}
.badge{position:absolute;left:17px;top:-5px;width:22px;height:25px;border-radius:11px/12.500px;background:#ff9aa8;color:#111;font-size:13px;display:flex;align-items:center;justify-content:center}
.wtxt{margin-left:11px;font-size:17.400px;line-height:24px;white-space:nowrap;margin-top:-4px}
.wtxt .dim{color:#d6d6d6}
.searchbox{margin-left:19px;width:329px;height:48px;border-radius:24px;background:#34406c;border:2px solid #3f4b76;display:flex;align-items:center;padding-left:14px;font-size:18px;color:#d8d8d8;position:relative}
.searchbox span{margin-left:16px}
.holi{margin-left:auto;margin-right:3px}
.tk{flex:none}
.tk-view{margin-left:20px}
.tk-cop{margin-left:29px}
.tk-edge{margin-left:30px}
.tk-files{margin-left:29px}
.tk-wrap{position:relative;width:38px;height:38px}
.chr{margin-left:28px}
.wa{margin-left:29px}
.tkb{position:absolute;right:-5px;top:-12px;width:23px;height:30px;border-radius:12px;display:flex;align-items:center;justify-content:center;font-size:14px;color:#111}
.olive{background:#6f8f2f;color:#ccd69c}
.sky{background:#4cc2ff}
.tk-vs{margin-left:28px}
.tk-active{margin-left:18px;width:59px;height:61px;background:#2e3b58;border:1px solid #3c4866;border-radius:6px;display:flex;flex-direction:column;align-items:center;padding-top:10px}
.tk-active i{display:block;width:24px;height:5px;margin-top:4px;border-radius:3px;background:#4cc2ff}
.tkimg{position:absolute;right:-7px;top:-6px}
.tk-photo{margin-left:17px}
.tray{display:flex;align-items:center;position:absolute;left:1530px;top:0;height:70px}
.lang{margin-left:29px;width:40px;text-align:center;font-size:17.400px;line-height:25px}
.wifi{margin-left:24px}
.vol{margin-left:12px}
.batt{margin-left:11px}
.clock{margin-left:20px;width:100px;text-align:right;font-size:17.600px;line-height:25px;white-space:nowrap}
.bell{margin-left:9px}
```
